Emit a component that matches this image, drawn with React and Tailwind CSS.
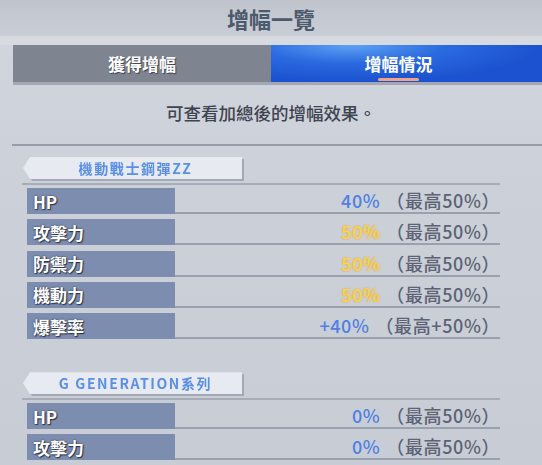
const font = { fontFamily: '"Noto Sans CJK TC", "Noto Sans", sans-serif' };

function StatRow({ label, value, max, tone }) {
  const valueClass =
    tone === 'gold'
      ? 'text-[#fad44c] [text-shadow:0_0_2px_#e0a030]'
      : 'text-[#4f80e2]';
  return (
    <div className="flex h-[26px]">
      <div className="flex w-[148px] items-center bg-[#7d8db0] pl-[6px] text-[17px] font-bold leading-none text-white [text-shadow:0_0_2px_#2c3448,1px_1px_1px_#2c3448]">
        {label}
      </div>
      <div className="flex flex-1 items-center justify-end border-b-2 border-[#9aa1ae] text-[18px] leading-none tracking-[0.6px]">
        <span className={`font-medium ${valueClass}`}>{value}</span>
        <span className="ml-[6px] font-medium text-[#5b6374]">（最高{max}）</span>
      </div>
    </div>
  );
}

function Section({ title, rows }) {
  return (
    <div className="pl-[22px]">
      <div className="ml-[1px] w-[219px] drop-shadow-[2px_2px_0_#a3a9b5]">
        <div className="flex h-[22px] items-center justify-center bg-[#e7eaf1] pl-[6px] text-[14px] font-bold tracking-[1.6px] text-[#5b8ee6] [clip-path:polygon(7px_0,100%_0,100%_100%,7px_100%,0_50%)]">
          {title}
        </div>
      </div>
      <div className="mt-[4px] h-[2px] w-[478px] bg-[#a7adb8]" />
      <div className="ml-[5px] mt-[3px] flex w-[473px] flex-col gap-[5.3px]">
        {rows.map((r) => (
          <StatRow key={r.label} {...r} />
        ))}
      </div>
    </div>
  );
}

export default function App() {
  const zz = [
    { label: 'HP', value: '40%', max: '50%', tone: 'blue' },
    { label: '攻擊力', value: '50%', max: '50%', tone: 'gold' },
    { label: '防禦力', value: '50%', max: '50%', tone: 'gold' },
    { label: '機動力', value: '50%', max: '50%', tone: 'gold' },
    { label: '爆擊率', value: '+40%', max: '+50%', tone: 'blue' },
  ];
  const gg = [
    { label: 'HP', value: '0%', max: '50%', tone: 'blue' },
    { label: '攻擊力', value: '0%', max: '50%', tone: 'blue' },
  ];

  return (
    <div
      style={font}
      className="relative h-[465px] w-[542px] overflow-hidden bg-[linear-gradient(180deg,#d2d6de_0%,#ccd0d9_40%,#c8ccd5_100%)]"
    >
      {/* title */}
      <div className="flex h-[36px] items-center justify-center bg-[linear-gradient(180deg,#c0c4cc,#c9cdd5)] text-[22px] font-bold text-[#4c5a6d]">
        增幅一覽
      </div>
      <div className="h-[9px] bg-[#d7dae1]" />

      {/* tabs */}
      <div className="ml-[13px] flex h-[40px] flex-col">
        <div className="flex h-[37px]">
          <div className="flex w-[258px] items-center justify-center bg-[#7f8491] text-[17px] font-bold text-white [text-shadow:1px_1px_1px_#3c4150]">
            獲得增幅
          </div>
          <div className="relative flex flex-1 items-center justify-center bg-[radial-gradient(ellipse_at_30%_0%,#5fa2f2_0%,#2a6ae0_35%,#1c52cf_70%)] pr-[16px] text-[17px] font-bold text-white">
            增幅情況
            <div className="absolute bottom-[1px] left-[107px] h-[3px] w-[41px] rounded-full bg-[#f2a386]" />
          </div>
        </div>
        <div className="h-[3px] bg-[#a3a8b2]" />
      </div>

      {/* description */}
      <div className="flex h-[59px] items-center justify-center pb-[2px] text-[17.5px] font-medium text-[#3e4450]">
        可查看加總後的增幅效果。
      </div>
      <div className="ml-[12px] h-[2px] bg-[#979da8]" />

      <div className="pt-[11px]">
        <Section title="機動戰士鋼彈ZZ" rows={zz} />
      </div>
      <div className="pt-[33px]">
        <Section title="G GENERATION系列" rows={gg} />
      </div>
    </div>
  );
}
